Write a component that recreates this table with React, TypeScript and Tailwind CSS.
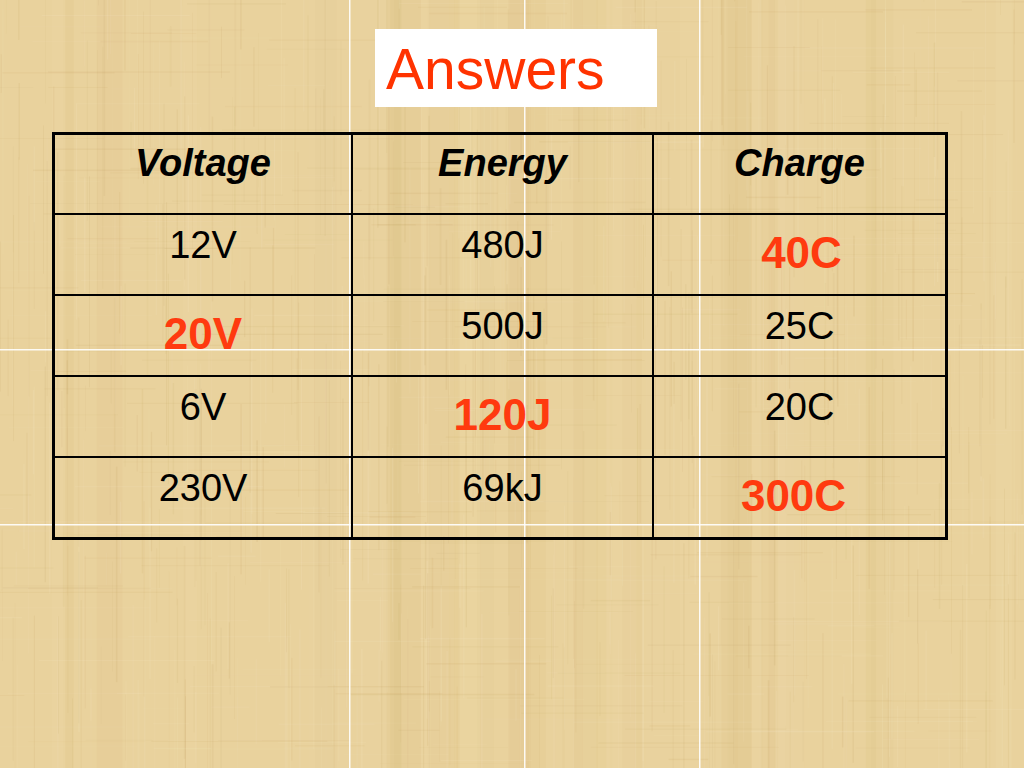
import React from 'react';

type Cell = { text: string; answer?: boolean };

const HEADERS = ['Voltage', 'Energy', 'Charge'];

const ROWS: Cell[][] = [
  [{ text: '12V' }, { text: '480J' }, { text: '40C', answer: true }],
  [{ text: '20V', answer: true }, { text: '500J' }, { text: '25C' }],
  [{ text: '6V' }, { text: '120J', answer: true }, { text: '20C' }],
  [{ text: '230V' }, { text: '69kJ' }, { text: '300C', answer: true }]
];

// small seeded random so the paper texture is the same every render
const seeded = (seed: number) => () => {
  seed |= 0;
  seed = (seed + 0x6d2b79f5) | 0;
  let t = Math.imul(seed ^ (seed >>> 15), 1 | seed);
  t = (t + Math.imul(t ^ (t >>> 7), 61 | t)) ^ t;
  return ((t ^ (t >>> 14)) >>> 0) / 4294967296;
};

const Papyrus: React.FC = () => {
  const rand = seeded(11);
  const bands = Array.from({ length: 40 }, () => ({
    x: rand() * 1024,
    w: 6 + rand() * 30,
    o: 0.03 + rand() * 0.05,
    dark: rand() > 0.5
  }));
  const fibresV = Array.from({ length: 700 }, () => ({
    x: rand() * 1024,
    y: rand() * 768 - 60,
    w: 0.5 + rand() * 1.2,
    h: 30 + rand() * 220,
    o: 0.04 + rand() * 0.07,
    dark: rand() > 0.45
  }));
  const fibresH = Array.from({ length: 420 }, () => ({
    x: rand() * 1024 - 60,
    y: rand() * 768,
    w: 30 + rand() * 160,
    h: 0.5 + rand() * 1,
    o: 0.04 + rand() * 0.06,
    dark: rand() > 0.5
  }));

  return (
    <svg className="absolute inset-0" width={1024} height={768} viewBox="0 0 1024 768">
      <rect width={1024} height={768} fill="#e9d29d" />
      {bands.map((b, i) => (
        <rect
          key={`b${i}`}
          x={b.x}
          y={0}
          width={b.w}
          height={768}
          fill={b.dark ? '#c9a45c' : '#fbecc4'}
          opacity={b.o}
        />
      ))}
      {fibresV.map((f, i) => (
        <rect
          key={`v${i}`}
          x={f.x}
          y={f.y}
          width={f.w}
          height={f.h}
          fill={f.dark ? '#b48d48' : '#fff6dc'}
          opacity={f.o}
        />
      ))}
      {fibresH.map((f, i) => (
        <rect
          key={`h${i}`}
          x={f.x}
          y={f.y}
          width={f.w}
          height={f.h}
          fill={f.dark ? '#b48d48' : '#fff6dc'}
          opacity={f.o}
        />
      ))}
      {[349, 524, 699].map((x) => (
        <rect key={`sx${x}`} x={x} y={0} width={1.5} height={768} fill="#ffffff" opacity={0.9} />
      ))}
      {[349, 524].map((y) => (
        <rect key={`sy${y}`} x={0} y={y} width={1024} height={1.5} fill="#ffffff" opacity={0.9} />
      ))}
    </svg>
  );
};

export default function App() {
  return (
    <div className="relative w-[1024px] h-[768px] overflow-hidden font-['Liberation_Sans',Arial,sans-serif]">
      <Papyrus />

      <div className="relative flex flex-col pt-[29px]">
        <div className="ml-[375px] w-[282px] h-[78px] bg-white pl-[11px] pt-[12px]">
          <span className="block text-[57px] leading-none text-[#ff3300]">Answers</span>
        </div>

        <div className="mt-[25px] ml-[52px] w-[896px] h-[408px] border-[3px] border-black grid grid-cols-[298px_301px_291px] grid-rows-[80px_81px_81px_81px_79px]">
          {HEADERS.map((h, c) => (
            <div
              key={h}
              className={`border-b-2 border-black pt-[9px] text-center text-[38px] leading-none font-bold italic text-black ${
                c < 2 ? 'border-r-2' : ''
              }`}
            >
              {h}
            </div>
          ))}
          {ROWS.map((row, r) =>
            row.map((cell, c) => (
              <div
                key={`${r}-${c}`}
                className={`border-black text-center leading-none ${c < 2 ? 'border-r-2' : ''} ${
                  r < ROWS.length - 1 ? 'border-b-2' : ''
                } ${
                  cell.answer
                    ? 'pt-[16px] text-[44px] font-bold text-[#ff3a0f]'
                    : 'pt-[11px] text-[38px] text-black'
                } ${r === 3 && c === 2 ? 'pr-[12px]' : ''} ${r === 0 && c === 2 ? 'pl-[4px]' : ''}`}
              >
                {cell.text}
              </div>
            ))
          )}
        </div>
      </div>
    </div>
  );
}
